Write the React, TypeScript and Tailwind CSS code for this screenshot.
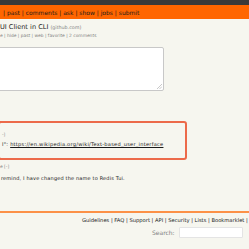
export default function App() {
  return (
    <div
      className="w-[249px] h-[249px] overflow-hidden bg-[#f6f6ef] text-[#1a1a1a]"
      style={{ fontFamily: '"DejaVu Sans", Verdana, sans-serif' }}
    >
      <div className="h-[5px] bg-[#3a3a3a]" />
      {/* top nav */}
      <div className="h-[14px] bg-[#ff6600] flex items-center pl-[3px] text-[6px] whitespace-nowrap">
        | past | comments | ask | show | jobs | submit
      </div>

      {/* title */}
      <div className="mt-[4px] h-[9px] flex items-center whitespace-nowrap text-[6.6px]">
        <span>UI Client in CLI</span>
        <span className="ml-[2px] text-[4.8px] text-[#828282]">(github.com)</span>
      </div>
      <div className="h-[8px] flex items-center whitespace-nowrap text-[4.4px] text-[#828282]">
        e | hide | past | web | favorite | 2 comments
      </div>

      {/* reply box */}
      <div className="mt-[7px] -ml-[2px] w-[166px] h-[44px] bg-white border border-[#c8c8c8] rounded-[2px] relative">
        <svg className="absolute right-[1px] bottom-[1px]" width="5" height="5" viewBox="0 0 5 5">
          <path d="M5 0 L0 5 M5 2.5 L2.5 5" stroke="#bbb" strokeWidth="0.8" />
        </svg>
      </div>

      {/* highlighted comment */}
      <div className="mt-[30px] -ml-[2px] w-[189px] h-[39px] border-2 border-[#ec6a4a] rounded-[3px] pl-[2px] pt-[9px]">
        <div className="text-[4.4px] leading-[6px] text-[#828282] whitespace-nowrap">-]</div>
        <div className="mt-[3px] text-[5.1px] leading-[7px] tracking-[0.24px] whitespace-nowrap">
          I": <span className="underline">https://en.wikipedia.org/wiki/Text-based_user_interface</span>
        </div>
      </div>

      {/* next comment */}
      <div className="mt-[4px] text-[4.4px] leading-[6px] text-[#828282] whitespace-nowrap">e [-]</div>
      <div className="mt-[4px] text-[5px] leading-[8px] tracking-[0.16px] whitespace-nowrap pl-[1px]">
        remind, I have changed the name to Redis Tui.
      </div>

      {/* footer */}
      <div className="mt-[29px] h-[2px] bg-[#ff6600] opacity-70" />
      <div className="mt-[4px] pl-[82px] text-[5.2px] leading-[7px] whitespace-nowrap">
        Guidelines | FAQ | Support | API | Security | Lists | Bookmarklet | Legal
      </div>
      <div className="mt-[3px] flex items-center whitespace-nowrap">
        <span className="ml-[152px] text-[6px] text-[#828282]">Search:</span>
        <div className="ml-[4px] w-[64px] h-[11px] bg-white border border-[#e4e4e4] rounded-[1px]" />
      </div>
    </div>
  );
}
